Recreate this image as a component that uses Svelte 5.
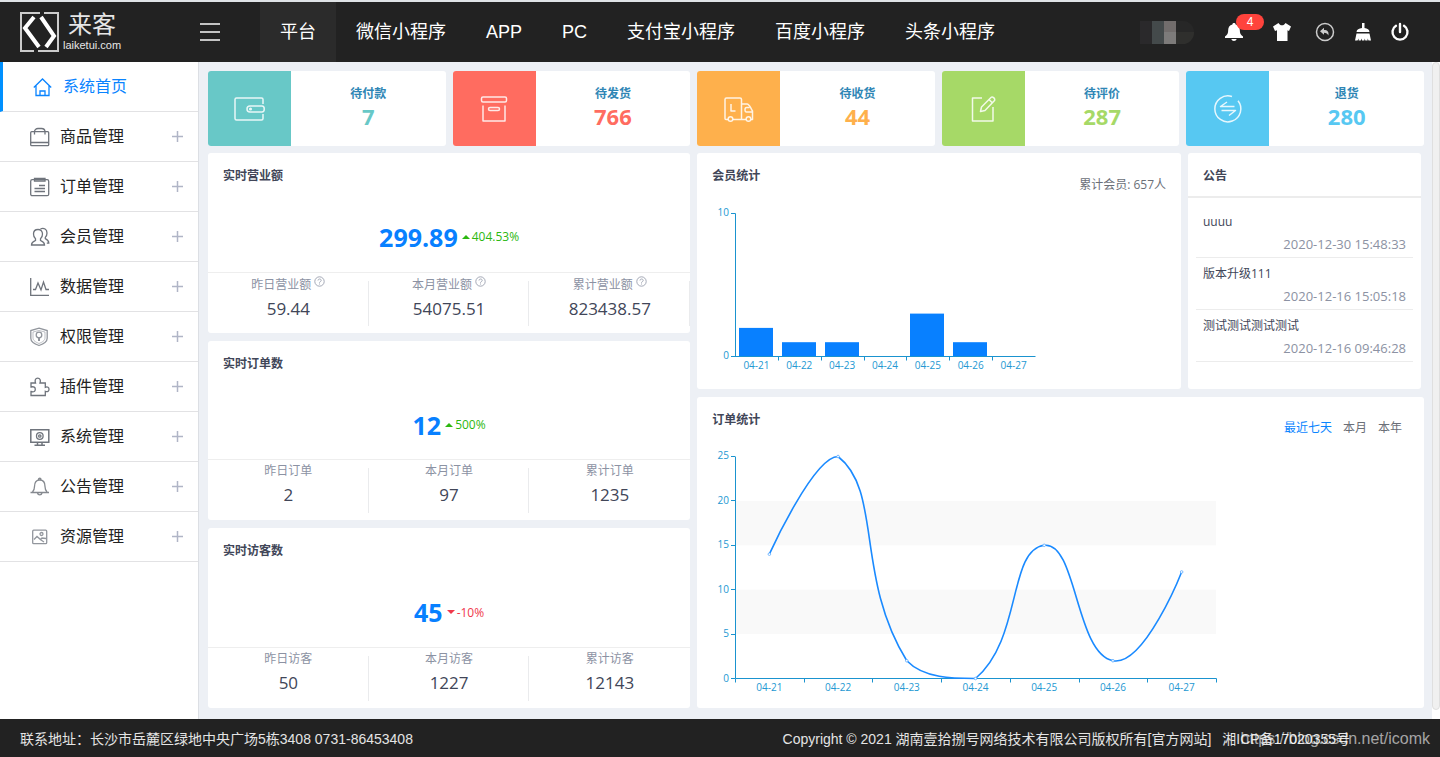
<script>
    const navItems = ['平台', '微信小程序', 'APP', 'PC', '支付宝小程序', '百度小程序', '头条小程序'];

    const menuItems = [
        { icon: 'bag', label: '商品管理' },
        { icon: 'order', label: '订单管理' },
        { icon: 'users', label: '会员管理' },
        { icon: 'data', label: '数据管理' },
        { icon: 'shield', label: '权限管理' },
        { icon: 'plugin', label: '插件管理' },
        { icon: 'system', label: '系统管理' },
        { icon: 'bell', label: '公告管理' },
        { icon: 'image', label: '资源管理' }
    ];

    const cards = [
        { icon: 'wallet', label: '待付款', value: 7, color: 'teal' },
        { icon: 'box', label: '待发货', value: 766, color: 'red' },
        { icon: 'truck', label: '待收货', value: 44, color: 'orange' },
        { icon: 'edit', label: '待评价', value: 287, color: 'green' },
        { icon: 'refund', label: '退货', value: 280, color: 'blue' }
    ];

    const panels = [
        {
            title: '实时营业额', value: '299.89', rate: '404.53%', up: true, help: true,
            cells: [['昨日营业额', '59.44'], ['本月营业额', '54075.51'], ['累计营业额', '823438.57']]
        },
        {
            title: '实时订单数', value: '12', rate: '500%', up: true, help: false,
            cells: [['昨日订单', '2'], ['本月订单', '97'], ['累计订单', '1235']]
        },
        {
            title: '实时访客数', value: '45', rate: '-10%', up: false, help: false,
            cells: [['昨日访客', '50'], ['本月访客', '1227'], ['累计访客', '12143']]
        }
    ];

    const notices = [
        { title: 'uuuu', time: '2020-12-30 15:48:33' },
        { title: '版本升级111', time: '2020-12-16 15:05:18' },
        { title: '测试测试测试测试', time: '2020-12-16 09:46:28' }
    ];

    const days = ['04-21', '04-22', '04-23', '04-24', '04-25', '04-26', '04-27'];
    const members = [2, 1, 1, 0, 3, 1, 0];
    const orders = [14, 25, 2, 0, 15, 2, 12];
    const ranges = ['最近七天', '本月', '本年'];
    let activeRange = $state('最近七天');

    // member chart
    const barStep = 300 / 7;
    const barBase = 151.5;
    const barUnit = 14.3;

    // order chart
    const lineStep = 481 / 7;
    const lineBase = 229.5;
    const lineUnit = 8.88;
    const lineTop = lineBase - 25 * lineUnit;
    const points = orders.map((v, i) => [23 + lineStep * (i + 0.5), lineBase - v * lineUnit]);

    // keep control points inside the plot area
    const clamp = (y) => Math.min(lineBase, Math.max(lineTop, y));

    function smoothPath(pts) {
        let out = `M${pts[0][0]} ${pts[0][1]}`;
        let cp = pts[0];
        for (let i = 1; i < pts.length; i++) {
            const p = pts[i];
            const prev = pts[i - 1];
            const next = pts[i + 1] || p;
            const vx = next[0] - prev[0];
            const vy = next[1] - prev[1];
            const a = Math.hypot(p[0] - prev[0], p[1] - prev[1]);
            const b = Math.hypot(next[0] - p[0], next[1] - p[1]);
            const r = b / (a + b);
            const end = next === p ? p : [p[0] - vx * 0.5 * (1 - r), clamp(p[1] - vy * 0.5 * (1 - r))];
            out += `C${cp[0]} ${cp[1]} ${end[0]} ${end[1]} ${p[0]} ${p[1]}`;
            cp = [p[0] + vx * 0.5 * r, clamp(p[1] + vy * 0.5 * r)];
        }
        return out;
    }
</script>

<div class="page">
    <header>
        <a class="logo" href="#home">
            <svg width="40" height="40" viewBox="0 0 40 40" fill="none">
                <path d="M20 1H1V39H14M18 39H38V1H24" stroke="#ccc" stroke-width="2" />
                <path d="M14 5 5 16 19 35" stroke="#fff" stroke-width="4" />
                <path d="M21 5 34 24 26 35" stroke="#fff" stroke-width="4" />
            </svg>
            <span class="logo-text">
                <span class="logo-name">来客</span>
                <span class="logo-url">laiketui.com</span>
            </span>
        </a>
        <button class="toggle" aria-label="菜单"><i></i><i></i><i></i></button>
        <nav class="top-nav">
            {#each navItems as item, i}
                <a href="#nav" class:active={i === 0}>{item}</a>
            {/each}
        </nav>
        <div class="tools">
            <span class="avatar"><i></i><i></i><i></i><i></i></span>
            <button class="tool bell" aria-label="消息">
                <svg width="18" height="18" viewBox="0 0 18 18" fill="#fff">
                    <path d="M9 0c-1 0-1.600.6-1.600 1.400C4.500 2 3.200 4.200 3.200 7c0 3.700-.9 5-3.200 6.500V15h18v-1.500C15.700 12 14.800 10.700 14.800 7c0-2.800-1.300-5-4.200-5.600C10.600.6 10 0 9 0zM6.300 16c.4 1.200 1.400 2 2.700 2s2.300-.8 2.700-2z" />
                </svg>
                <span class="badge">4</span>
            </button>
            <button class="tool shirt" aria-label="皮肤">
                <svg width="18" height="18" viewBox="0 0 18 18" fill="#fff">
                    <path d="M5.500 0 0 3.500 2 8l2-.8V18h10.500V7.200L16 8l2-4.500L12.500 0c-1 1.800-2 2.300-3.500 2.300S6.500 1.800 5.500 0z" />
                </svg>
            </button>
            <button class="tool back" aria-label="返回">
                <svg width="20" height="20" viewBox="0 0 20 20">
                    <circle cx="10" cy="10" r="8.500" fill="none" stroke="#ccc" stroke-width="1.500" />
                    <path d="M5 9.200 9 5.800v2.100c3.500 0 5.300 2 4.300 5.700-.7-2-2-2.900-4.300-2.900v2z" fill="#ccc" />
                </svg>
            </button>
            <button class="tool brush" aria-label="清除缓存">
                <svg width="16" height="18" viewBox="0 0 16 18" fill="#fff">
                    <path d="M7 0h2.500v5c3 .3 4.800 1.500 5 4H1.500c.2-2.500 2.500-3.700 5.500-4zM1.500 10.500h13L16 17.500h-2.500l-.8-2-.2 2h-2.200l-.5-2-.5 2H7l-.4-2-.8 2H3.600l.2-2-1.300 2H0z" />
                </svg>
            </button>
            <button class="tool" aria-label="退出">
                <svg width="20" height="20" viewBox="0 0 20 20" fill="none" stroke="#fff" stroke-width="2.400" stroke-linecap="round">
                    <path d="M6 3.800a7.500 7.500 0 1 0 8 0M10 2v8" />
                </svg>
            </button>
        </div>
    </header>

    <div class="body">
        <aside>
            <a href="#home" class="menu-item current">
                <svg width="20" height="20" viewBox="0 0 20 20" fill="none" stroke="#0a84ff" stroke-width="1.300">
                    <path d="M.800 10.500 9.500 2 18.200 10.500M3 8.500v10h13v-10M7 18.500v-4.500h5v4.500" />
                </svg>
                <span>系统首页</span>
            </a>
            {#each menuItems as item}
                <a href="#menu" class="menu-item">
                    <svg width="20" height="20" viewBox="0 0 20 20" fill="none" stroke="#6f747c" stroke-width="1.300">
                        {#if item.icon === 'bag'}
                            <rect x="0.700" y="4.700" width="18" height="14" rx="1" />
                            <path d="M1 15.500h18M4.500 7.500V5c0-2 1.500-3.500 3.500-3.500h3.500c2 0 3.500 1.500 3.500 3.500v2.500" />
                        {:else if item.icon === 'order'}
                            <rect x="0.700" y="2.700" width="18" height="16" rx="1.500" />
                            <path d="M4.500 1.500h10.500v2.500H4.500zM9 8.500h6M4.500 11.500h10.500M4.500 14.500h10.500" />
                        {:else if item.icon === 'users'}
                            <path d="M8 2.500c-2.800 0-4.500 1.800-4.500 4.500 0 2 .8 3.800 2 4.800v1.700C3.500 14.500 1.500 15 1.500 18h13c0-3-2-3.500-4-4.500v-1.700c1.200-1 2-2.800 2-4.800 0-2.700-1.700-4.500-4.500-4.500z" />
                            <path d="M10.500 1.900c3.500-1.500 6.500.6 6.500 4 0 2-.7 3.500-1.700 4.500v1.300c1.700.8 3.500 1.800 3.500 4.500h-2" />
                        {:else if item.icon === 'data'}
                            <path d="M.700 1v17.300H19M3 12.500h2.500L8 6l3 7 2.500-8 2.500 7.500h3" />
                        {:else if item.icon === 'shield'}
                            <path stroke="#92969d" d="M9 1.200 17.200 3.500v7.700c0 3.500-4 5.800-8.200 7.300C4.800 17 .8 14.700.8 11.200V3.500z" />
                            <path stroke="#92969d" d="M9 3.500 15 5v6c0 2.500-2.500 4-6 5.500-3.500-1.500-6-3-6-5.500V5z" stroke-width=".6" />
                            <circle stroke="#92969d" cx="9" cy="8" r="2.800" /><path stroke="#92969d" d="M9 10v4" stroke-width="2" />
                        {:else if item.icon === 'plugin'}
                            <path d="M1 6h4.500C4.500 3 5.500 1.200 7.700 1.200S11 3 10 6h5.300v4.300c2.300-1 3.700.2 3.700 2s-1.400 3-3.700 2v4.200H1v-4c3 .8 4.300-.2 4.300-2.200S4 9.200 1 10z" />
                        {:else if item.icon === 'system'}
                            <path d="M.800 2.800h18v12.500H.8zM4.500 18.300h10.500M7.500 15.500v2.800M12 15.500v2.800" stroke-width="1.500" />
                            <circle cx="9.800" cy="9" r="3.300" /><circle cx="9.800" cy="9" r="1.200" />
                        {:else if item.icon === 'bell'}
                            <path stroke="#85898f" d="M.500 15.500h18.500M2.500 15c1.300-1.300 2-2.600 2-5.500 0-4 1.800-6.500 5.200-6.500s5.300 2.500 5.300 6.500c0 2.900.7 4.200 2 5.500M8.500 2.500c0-1.700 2.500-1.700 2.500 0M7.500 16c.5 2.500 4 2.500 4.500 0" />
                        {:else}
                            <rect stroke="#92969d" x="2.700" y="3.200" width="14" height="13.500" rx="1" />
                            <circle stroke="#92969d" cx="11.500" cy="7" r="1.500" />
                            <path stroke="#92969d" d="M4 12.500 7 9.500l3.500 3 1.500-1.500 4 .5M11 13l3 2" />
                        {/if}
                    </svg>
                    <span>{item.label}</span>
                    <svg class="plus" width="11" height="11" viewBox="0 0 11 11"><path d="M0 5.500h11M5.500 0v11" stroke="#b0b5c6" stroke-width="1.500" /></svg>
                </a>
            {/each}
        </aside>

        <main>
            <div class="grid">
                {#each cards as card}
                    <section class="card {card.color}">
                        <div class="card-icon">
                            <svg width="32" height="32" viewBox="0 0 32 32" fill="none" stroke="#fff" stroke-opacity=".85" stroke-width="1.500" stroke-linejoin="round">
                                {#if card.icon === 'wallet'}
                                    <path d="M29 11V6.500c0-1-.5-1.500-1.500-1.500h-25C1.500 5 1 5.500 1 6.500v19c0 1 .5 1.500 1.500 1.500h25c1 0 1.500-.5 1.500-1.500V21M16 13h12c3 0 3 6 0 6H16c-4 0-4-6 0-6z" />
                                    <circle cx="16.500" cy="16" r=".8" />
                                {:else if card.icon === 'box'}
                                    <rect x="3.500" y="4" width="25" height="5" rx="1.500" />
                                    <path d="M5 12.500V28h22V12.500" />
                                    <rect x="10.500" y="14.500" width="11" height="3" rx="1.500" />
                                {:else if card.icon === 'truck'}
                                    <path d="M5 26.500H3c-.7 0-1-.3-1-1V6.500C2 5.500 2.500 5 3.500 5H17c1 0 1.500.5 1.500 1.500v20H10M18.500 11h5.500c2.500 0 3.500 4 5.500 7v8.500h-1.500M23 26.500h-4.500M8 11v7h4.500M26.500 14.500h-3c-2 0-2 4.500 0 4.500h6" />
                                    <circle cx="7.500" cy="26" r="2.300" /><circle cx="25.500" cy="26" r="2.300" />
                                {:else if card.icon === 'edit'}
                                    <path d="M15 5H5.500v23H26V14M13.500 18.500l1-4.500L24 4.500c1.500-1.500 5 1.500 3.300 3.300L18 17.500zM22.500 7l3 3" />
                                {:else}
                                    <path d="M20 3.500a13 13 0 1 0 6 4.200M15 9 8.500 13.500h14M9.500 17.500h14L17 22.500" />
                                {/if}
                            </svg>
                        </div>
                        <div class="card-info">
                            <h3>{card.label}</h3>
                            <strong>{card.value}</strong>
                        </div>
                    </section>
                {/each}

                <div class="left-col">
                    {#each panels as panel}
                        <section class="panel stat">
                            <h2>{panel.title}</h2>
                            <div class="stat-main" class:down={!panel.up}>
                                <strong>{panel.value}</strong>
                                <i class="arrow"></i>
                                <span>{panel.rate}</span>
                            </div>
                            <div class="stat-cells" class:full={panel.help}>
                                {#each panel.cells as cell}
                                    <div class="cell">
                                        <p>
                                            {cell[0]}
                                            {#if panel.help}
                                                <svg width="11" height="11" viewBox="0 0 11 11" fill="none" stroke="#9a9fae">
                                                    <circle cx="5.500" cy="5.500" r="4.700" stroke-width=".9" />
                                                    <path d="M4 4.500c0-2 3.200-2 3.200 0 0 1.200-1.700 1-1.700 2.200M5.500 7.500v1" stroke-width=".9" />
                                                </svg>
                                            {/if}
                                        </p>
                                        <b>{cell[1]}</b>
                                    </div>
                                {/each}
                            </div>
                        </section>
                    {/each}
                </div>

                <div class="right-col">
                    <div class="right-top">
                        <section class="panel members">
                            <div class="panel-head">
                                <h2>会员统计</h2>
                                <span class="total">累计会员: 657人</span>
                            </div>
                            <svg class="chart" width="330" height="176" viewBox="0 0 330 176">
                                {#each members as v, i}
                                    {#if v}
                                        <rect x={Math.round(27 + barStep * i)} y={barBase - v * barUnit} width="34" height={v * barUnit} fill="#0880ff" />
                                    {/if}
                                {/each}
                                <path class="axis" d="M19 8.500h4.500v143M19 151.500h304.500" />
                                {#each days as day, i}
                                    {#if i}<path class="axis" d="M{Math.round(23 + barStep * i) + 0.5} 151.500v4" />{/if}
                                    <text x={23 + barStep * (i + 0.5)} y="164" text-anchor="middle">{day}</text>
                                {/each}
                                <text x="17" y="11" text-anchor="end">10</text>
                                <text x="17" y="154" text-anchor="end">0</text>
                            </svg>
                        </section>

                        <section class="panel notice">
                            <h2>公告</h2>
                            <ul>
                                {#each notices as notice}
                                    <li>
                                        <a href="#notice">{notice.title}</a>
                                        <time>{notice.time}</time>
                                    </li>
                                {/each}
                            </ul>
                        </section>
                    </div>

                    <section class="panel orders">
                        <div class="panel-head">
                            <h2>订单统计</h2>
                            <div class="ranges">
                                {#each ranges as range}
                                    <button class:active={activeRange === range} onclick={() => (activeRange = range)}>{range}</button>
                                {/each}
                            </div>
                        </div>
                        <svg class="chart" width="520" height="246" viewBox="0 0 520 246">
                            <rect x="24" y={lineBase - 20 * lineUnit} width="480" height={5 * lineUnit} fill="#f9f9f9" />
                            <rect x="24" y={lineBase - 10 * lineUnit} width="480" height={5 * lineUnit} fill="#f9f9f9" />
                            <path class="axis" d="M23.500 {lineTop}V{lineBase}H504.500" />
                            {#each [0, 5, 10, 15, 20, 25] as v}
                                <path class="axis" d="M19 {Math.floor(lineBase - v * lineUnit) + 0.5}h4" />
                                <text x="17" y={Math.round(lineBase - v * lineUnit) + 3} text-anchor="end">{v}</text>
                            {/each}
                            {#each days as day, i}
                                <text x={points[i][0]} y="242" text-anchor="middle">{day}</text>
                            {/each}
                            {#each [0, 1, 2, 3, 4, 5, 6, 7] as i}
                                <path class="axis" d="M{Math.round(23 + lineStep * i) + 0.5} {lineBase}v4" />
                            {/each}
                            <path d={smoothPath(points)} fill="none" stroke="#1a8aff" stroke-width="1.600" />
                            {#each points as p}
                                <circle cx={p[0]} cy={p[1]} r="1.300" fill="#fff" stroke="#5cabff" stroke-width=".8" />
                            {/each}
                        </svg>
                    </section>
                </div>
            </div>
        </main>
        <div class="scroll-track"></div>
    </div>

    <footer>
        <span>联系地址：长沙市岳麓区绿地中央广场5栋3408 0731-86453408</span>
        <span class="copyright">
            <span>Copyright © 2021 湖南壹拾捌号网络技术有限公司版权所有<a href="#site">[官方网站]</a></span>
            <span>湘ICP备17020355号</span>
        </span>
        <span class="watermark">https://blog.csdn.net/icomk</span>
    </footer>
</div>

<style>
    :global(body) {
        background: #fff;
        font-family: 'Liberation Sans', 'Noto Sans CJK SC', sans-serif;
    }

    .page {
        display: flex;
        flex-direction: column;
        min-height: 100vh;
    }

    a {
        color: inherit;
        text-decoration: none;
    }

    button {
        padding: 0;
        border: 0;
        background: none;
        font: inherit;
        color: inherit;
        cursor: pointer;
    }

    h2,
    h3,
    p,
    ul {
        margin: 0;
        padding: 0;
    }

    svg {
        display: block;
        flex: none;
    }

    /* Header */
    header {
        display: flex;
        align-items: center;
        height: 60px;
        border-top: 2px solid #dfe3e6;
        background: #222;
        color: #fff;
    }

    .logo {
        display: flex;
        gap: 3px;
        width: 180px;
        padding-left: 20px;
        box-sizing: border-box;
        color: #e6e6e6;
    }

    .logo-text {
        display: flex;
        flex-direction: column;
    }

    .logo-name {
        padding-left: 5px;
        font-size: 24px;
        line-height: 26px;
    }

    .logo-url {
        font-size: 11px;
        line-height: 14px;
    }

    .toggle {
        display: flex;
        flex-direction: column;
        gap: 6px;
        width: 20px;
        margin: 0 40px 0 20px;
    }

    .toggle i {
        height: 2px;
        background: #c4c4c4;
    }

    .top-nav {
        display: flex;
        font-size: 18px;
        line-height: 60px;
        white-space: nowrap;
    }

    .top-nav a {
        padding: 0 20px;
    }

    .top-nav .active {
        background: #2b2b2b;
    }

    .tools {
        display: flex;
        align-items: center;
        margin-left: auto;
        padding-right: 30px;
    }

    .avatar {
        display: flex;
        width: 54px;
        height: 23px;
        margin-right: 31px;
        border-radius: 0 12px 12px 0;
        overflow: hidden;
    }

    .avatar i {
        width: 12px;
        background: #2a292b;
    }

    .avatar i:nth-child(2) {
        background: #444a4b;
    }

    .avatar i:nth-child(3) {
        background: linear-gradient(#726d6c 50%, #7d7b7a 50%);
    }

    .avatar i:nth-child(4) {
        width: 18px;
        background: linear-gradient(#272727 50%, #2f2f2d 50%);
    }

    .tool {
        position: relative;
    }

    .bell {
        margin-right: 30px;
    }

    .shirt {
        margin-right: 24px;
    }

    .back {
        margin-right: 20px;
    }

    .brush {
        margin-right: 19px;
    }

    .badge {
        position: absolute;
        top: -9px;
        left: 11px;
        width: 28px;
        border-radius: 8px;
        background: #ff433c;
        font-size: 12px;
        line-height: 16px;
    }

    /* Sidebar */
    .body {
        display: flex;
        flex: 1;
    }

    aside {
        width: 198px;
        flex: none;
        border-right: 1px solid #dcdfe4;
        background: #fff;
        color: #222;
    }

    .menu-item {
        display: flex;
        align-items: center;
        height: 49px;
        padding: 0 15px 0 30px;
        border-bottom: 1px solid #e2e2e4;
        font-size: 16px;
        line-height: 24px;
    }

    .menu-item span {
        margin-left: 10px;
    }

    .menu-item.current {
        border-left: 3px solid #0090ff;
        color: #0a84ff;
    }

    .plus {
        margin-left: auto;
    }

    /* Dashboard */
    main {
        display: flex;
        flex: 1;
        padding: 9px 8px 11px 9px;
        background: #edf0f5;
        font-family: 'Open Sans', 'Noto Sans CJK SC', sans-serif;
        font-size: 12px;
        color: #414658;
    }

    .grid {
        display: grid;
        flex: 1;
        grid-template-columns: repeat(5, 1fr);
        grid-template-rows: 75px 1fr;
        gap: 7px;
    }

    .card {
        display: flex;
        border-radius: 3px;
        overflow: hidden;
        background: #fff;
    }

    .card-icon {
        display: flex;
        align-items: center;
        justify-content: center;
        width: 83px;
        background: currentColor;
    }

    .card-info {
        flex: 1;
        padding-top: 13px;
        text-align: center;
    }

    .card-info h3 {
        font-size: 12px;
        line-height: 20px;
        color: #2f86b5;
    }

    .card-info strong {
        display: block;
        font-size: 22px;
        line-height: 24px;
    }

    .teal {
        color: #68c8c7;
    }

    .red {
        color: #ff6c60;
    }

    .orange {
        color: #feb04c;
    }

    .green {
        color: #a6d967;
    }

    .blue {
        color: #57c8f2;
    }

    .left-col {
        display: flex;
        grid-column: span 2;
        flex-direction: column;
        gap: 8px;
    }

    .right-col {
        display: flex;
        grid-column: span 3;
        flex-direction: column;
        gap: 8px;
    }

    .panel {
        border-radius: 3px;
        background: #fff;
    }

    .panel h2 {
        padding: 14px 15px 0;
        font-size: 12px;
        line-height: 18px;
    }

    .stat {
        display: flex;
        flex: 1;
        flex-direction: column;
    }

    .stat-main {
        display: flex;
        flex: 1;
        align-items: center;
        justify-content: center;
        padding-top: 17px;
        color: #2cb810;
    }

    .stat-main.down {
        color: #f0384b;
    }

    .stat-main strong {
        font-size: 25px;
        line-height: 34px;
        color: #0880ff;
    }

    .arrow {
        margin: 0 2px 0 4px;
        border: 4px solid transparent;
        border-top-width: 0;
        border-bottom-color: currentColor;
    }

    .down .arrow {
        border-width: 4px 4px 0;
        border-top-color: currentColor;
    }

    .stat-cells {
        display: grid;
        grid-template-columns: repeat(3, 1fr);
        height: 60px;
        border-top: 1px solid #eee;
        text-align: center;
    }

    .cell {
        position: relative;
    }

    .cell::after {
        content: '';
        position: absolute;
        top: 8px;
        right: 0;
        width: 1px;
        height: 45px;
        background: #eaebed;
    }

    .cell:last-child::after {
        display: none;
    }

    .full .cell:last-child::after {
        display: block;
    }

    .cell p {
        display: flex;
        justify-content: center;
        gap: 3px;
        line-height: 22px;
        color: #8c92a3;
    }

    .full p {
        padding-top: 1px;
    }

    .cell p svg {
        margin-top: 2px;
    }

    .cell b {
        display: block;
        font-size: 17px;
        font-weight: 400;
        line-height: 26px;
    }

    .right-top {
        display: flex;
        gap: 7px;
        min-height: 236px;
        margin-right: 3px;
    }

    .members {
        flex: 1;
    }

    .panel-head {
        display: flex;
        align-items: flex-start;
        justify-content: space-between;
        height: 52px;
    }

    .total {
        margin: 23px 15px 0 0;
        line-height: 18px;
        color: #6b6f78;
    }

    .chart {
        margin-left: 15px;
        overflow: visible;
    }

    .chart text {
        font-size: 10px;
        fill: #2398d2;
    }

    .axis {
        fill: none;
        stroke: #1a93cf;
    }

    .notice {
        width: 233px;
    }

    .notice h2 {
        padding-bottom: 11px;
        border-bottom: 2px solid #ececec;
    }

    .notice ul {
        margin: 13px 8px 0;
        list-style: none;
    }

    .notice li {
        display: flex;
        flex-direction: column;
        padding: 0 7px 2px;
        border-bottom: 1px solid #ececec;
        line-height: 22px;
    }

    .notice li + li {
        padding-top: 5px;
    }

    .notice time {
        align-self: flex-end;
        font-size: 13px;
        color: #8c92a3;
    }

    .orders {
        flex: 1;
    }

    .ranges {
        display: flex;
        gap: 11px;
        margin: 22px 22px 0 0;
        line-height: 18px;
        color: #6b6f78;
    }

    .ranges .active {
        color: #0a84ff;
    }

    .scroll-track {
        width: 6px;
        flex: none;
        margin: 0 0 9px;
        border: 1px solid #dfdfdf;
        border-radius: 4px;
        background: #f0f0f0;
    }

    /* Footer */
    footer {
        position: relative;
        display: flex;
        align-items: center;
        justify-content: space-between;
        height: 38px;
        padding: 2px 90px 0 20px;
        box-sizing: border-box;
        background: #222;
        color: #e4e4e4;
        font-size: 14px;
        line-height: 20px;
        white-space: nowrap;
    }

    .copyright {
        display: flex;
        gap: 11px;
    }

    .watermark {
        position: absolute;
        right: 10px;
        font-size: 16px;
        color: rgba(255, 255, 255, 0.6);
    }
</style>
